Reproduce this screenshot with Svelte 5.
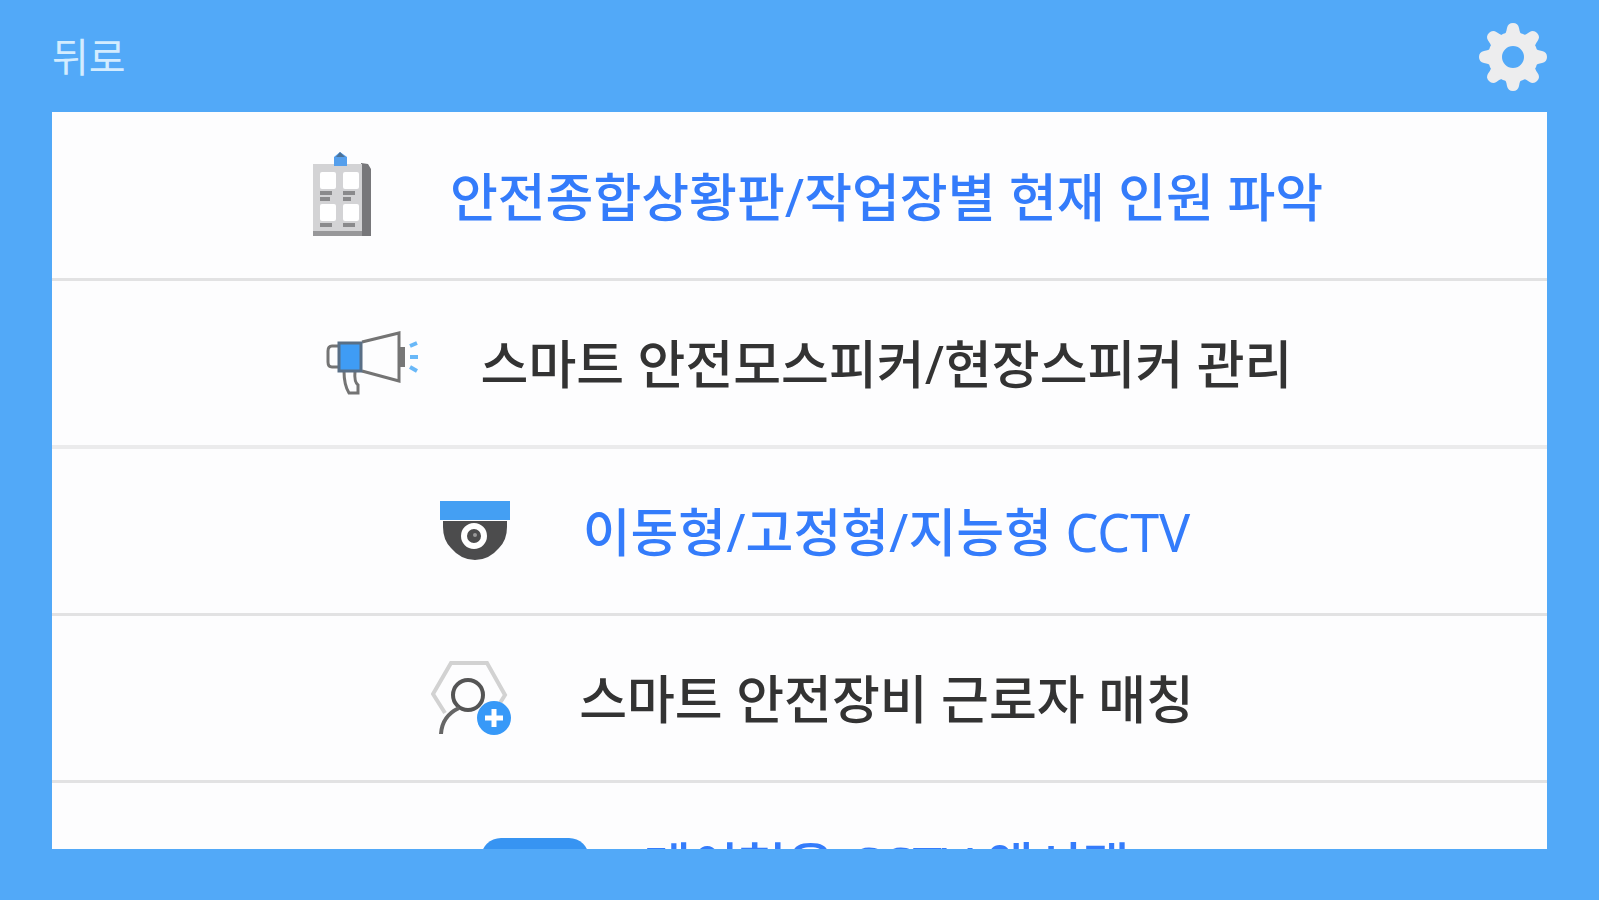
<script>
  const items = [
    { icon: 'building', label: '안전종합상황판/작업장별 현재 인원 파악', accent: true },
    { icon: 'speaker', label: '스마트 안전모스피커/현장스피커 관리', divider: true },
    { icon: 'cctv', label: '이동형/고정형/지능형 CCTV', accent: true },
    { icon: 'worker', label: '스마트 안전장비 근로자 매칭' },
    { icon: 'panel', label: '데이현용 CCTV 액서택', accent: true }
  ];

  // Latin runs and slashes are set lighter than the Hangul around them.
  const split = (label) => label.split(/([A-Z/]+)/);
</script>

<div class="screen">
  <header>
    <button class="back" type="button">뒤로</button>
    <button class="settings" type="button" aria-label="설정">
      <svg width="68" height="68" viewBox="0 0 68 68" aria-hidden="true">
        <g fill="#ededee">
          {#each [0, 45, 90, 135, 180, 225, 270, 315] as angle}
            <path d="M23 15Q27 12 28 5Q29 0 34 0Q39 0 40 5Q41 12 45 15Z" transform="rotate({angle} 34 34)" />
          {/each}
        </g>
        <circle cx="34" cy="34" r="18" fill="none" stroke="#ededee" stroke-width="14" />
      </svg>
    </button>
  </header>

  <main>
    <ul>
      {#each items as item}
        <li class:divider={item.divider}>
          <a href="#{item.icon}" class:accent={item.accent}>
            <span class="icon">
              {#if item.icon === 'building'}
                <svg width="62" height="88" viewBox="0 0 62 88" aria-hidden="true">
                  <path d="M50 11l7 1 3 5v67H50z" fill="#77777a" />
                  <path d="M2 12h49v72H2z" fill="#d3d3d5" />
                  <path d="M2 79h49v5H2z" fill="#98989a" />
                  <path d="M23 14V5L29 0l7 5v9z" fill="#559fec" />
                  <path d="M25 5l4-5 5 5z" fill="#4d7297" />
                  <g fill="#fff">
                    <rect x="9" y="20" width="16" height="17" rx="2" /><rect x="32" y="20" width="16" height="17" rx="2" />
                    <rect x="9" y="52" width="16" height="17" rx="2" /><rect x="32" y="52" width="16" height="17" rx="2" />
                  </g>
                  <path d="M9 41h12M9 47h10M32 41h12M32 47h8M9 73h12M32 73h12" stroke="#8a8a8c" stroke-width="4" />
                </svg>
              {:else if item.icon === 'speaker'}
                <svg width="94" height="64" viewBox="0 0 94 64" aria-hidden="true">
                  <g fill="none" stroke="#747474" stroke-width="3">
                    <path d="M13 15H6Q2 15 2 20v11q0 5 4 5h7M36 11L73 2v48L36 40" />
                    <path d="M18 40q0 14 5 22h9V54q-4-3-3-14" />
                  </g>
                  <rect x="13" y="12" width="22" height="28" fill="#3f9cf5" stroke="#596f86" stroke-width="3" />
                  <rect x="74" y="16" width="5" height="20" fill="#777" />
                  <path d="M84 15l7-3M84 26h8M84 36l7 4" stroke="#69b8f8" stroke-width="4" />
                </svg>
              {:else if item.icon === 'cctv'}
                <svg width="70" height="60" viewBox="0 0 70 60" aria-hidden="true">
                  <path d="M3 20h64v6q0 13-8 21-10 12-24 12T11 47Q3 39 3 26z" fill="#4c4c4d" />
                  <rect width="70" height="19" fill="#449ff3" />
                  <circle cx="34" cy="35" r="10" fill="#4c4c4d" stroke="#fff" stroke-width="6" />
                  <circle cx="35" cy="34" r="2" fill="#999" />
                </svg>
              {:else if item.icon === 'worker'}
                <svg width="80" height="74" viewBox="0 0 80 74" aria-hidden="true">
                  <path d="M14 52L2 33 20 2h36l18 32-5 8" fill="none" stroke="#d2d2d2" stroke-width="4" />
                  <circle cx="37" cy="34" r="15" fill="none" stroke="#555" stroke-width="4" />
                  <path d="M28 47Q11 55 10 73" fill="none" stroke="#666" stroke-width="4" />
                  <circle cx="63" cy="57" r="17" fill="#3799f8" />
                  <path d="M63 48v18M54 57h18" stroke="#fff" stroke-width="5" />
                </svg>
              {:else}
                <svg width="108" height="54" viewBox="0 0 108 54" aria-hidden="true">
                  <rect width="108" height="54" rx="20" fill="#3794f2" />
                </svg>
              {/if}
            </span>
            <span class="label">{#each split(item.label) as part, i}{#if i % 2}<span class="latin">{part}</span>{:else}{part}{/if}{/each}</span>
          </a>
        </li>
      {/each}
    </ul>
  </main>
</div>

<style>
  :global(body) {
    background: #52a9f8;
  }
  .screen {
    box-sizing: border-box;
    height: 100vh;
    display: flex;
    flex-direction: column;
    padding: 0 52px 51px;
    background: #52a9f8;
    font-family: "Noto Sans", "Noto Sans CJK KR", sans-serif;
  }
  header {
    flex: none;
    height: 112px;
    display: flex;
    align-items: center;
    justify-content: space-between;
    box-sizing: border-box;
    padding-top: 2px;
  }
  button {
    border: 0;
    padding: 0;
    background: none;
    font: inherit;
    cursor: pointer;
  }
  .back {
    color: #d3ecff;
    font-size: 40px;
    line-height: 56px;
  }
  svg {
    display: block;
  }
  main {
    flex: 1;
    min-height: 0;
    overflow: hidden;
    background: #fdfdfe;
  }
  ul {
    margin: 0;
    padding: 2px 0 0;
    list-style: none;
  }
  li {
    border-bottom: 3px solid #e2e2e3;
  }
  .divider {
    border-bottom: 4px solid #ebebec;
  }
  a {
    display: flex;
    align-items: center;
    justify-content: center;
    gap: 42px;
    height: 164px;
    color: #333;
    font-size: 52px;
    font-weight: 500;
    line-height: 72px;
    white-space: nowrap;
    text-decoration: none;
  }
  .accent {
    color: #347cfb;
  }
  .icon {
    width: 132px;
    display: flex;
    justify-content: center;
  }
  .label {
    padding-top: 2px;
  }
  .latin {
    font-weight: 400;
  }
</style>
